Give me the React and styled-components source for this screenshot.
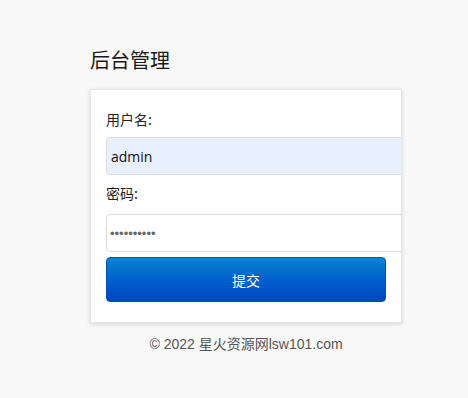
import React from "react";
import styled, { createGlobalStyle } from "styled-components";

const Global = createGlobalStyle`
  html, body { margin: 0; padding: 0; background: #f8f8f8; }
  body { font-family: "Liberation Sans", "Noto Sans CJK SC", sans-serif; color: #222; }
  * { box-sizing: border-box; }
`;

const Page = styled.div`
  padding: 46px 0 0 90px;
  width: 402px;
`;

const Title = styled.h1`
  margin: 0 0 15px 0;
  font-size: 20px;
  line-height: 28px;
  font-weight: normal;
  color: #1a1a1a;
  font-family: "Noto Sans CJK SC", sans-serif;
`;

const Card = styled.form`
  width: 312px;
  background: #fff;
  border: 1px solid #e6e6e6;
  box-shadow: 0 1px 4px rgba(0, 0, 0, 0.15);
  padding: 19px 0 20px 15px;
  overflow: hidden;
  display: flex;
  flex-direction: column;
`;

const Label = styled.label`
  font-size: 14px;
  line-height: 20px;
  color: #222;
  font-family: "Noto Sans CJK SC", sans-serif;
  margin: ${(p) => p.$mt || 0}px 0 ${(p) => p.$mb}px 0;
`;

const Input = styled.input`
  width: 320px;
  height: 38px;
  border: 1px solid #dcdcdc;
  border-radius: 4px;
  padding: 0 ${(p) => (p.type === "password" ? "3px" : "4px")};
  font-size: ${(p) => (p.type === "password" ? "13px" : "14px")};
  font-family: ${(p) => (p.type === "password" ? '"Liberation Sans", sans-serif' : '"Open Sans", "Liberation Sans", sans-serif')};
  color: ${(p) => (p.type === "password" ? "#666" : "#111")};
  background: ${(p) => (p.$filled ? "#e8f0fe" : "#fff")};
  outline: none;
`;

const Button = styled.button`
  margin-top: 5px;
  width: 280px;
  height: 45px;
  border: 1px solid #0050b8;
  border-radius: 4px;
  background: linear-gradient(to bottom, #0a86cc 0%, #0060cc 50%, #0045c0 100%);
  color: #fff;
  font-size: 14px;
  font-family: "Noto Sans CJK SC", sans-serif;
  cursor: pointer;
`;

const Footer = styled.div`
  width: 312px;
  margin-top: 11px;
  text-align: center;
  font-size: 14px;
  line-height: 20px;
  color: #555;
  font-family: "Liberation Sans", "Noto Sans CJK SC", sans-serif;
`;

export default function App() {
  return (
    <>
      <Global />
      <Page>
        <Title>后台管理</Title>
        <Card onSubmit={(e) => e.preventDefault()}>
          <Label $mb={8}>用户名:</Label>
          <Input type="text" defaultValue="admin" $filled />
          <Label $mt={8} $mb={11}>密码:</Label>
          <Input type="password" defaultValue="1234567890" />
          <Button type="submit">提交</Button>
        </Card>
        <Footer>© 2022 星火资源网lsw101.com</Footer>
      </Page>
    </>
  );
}
